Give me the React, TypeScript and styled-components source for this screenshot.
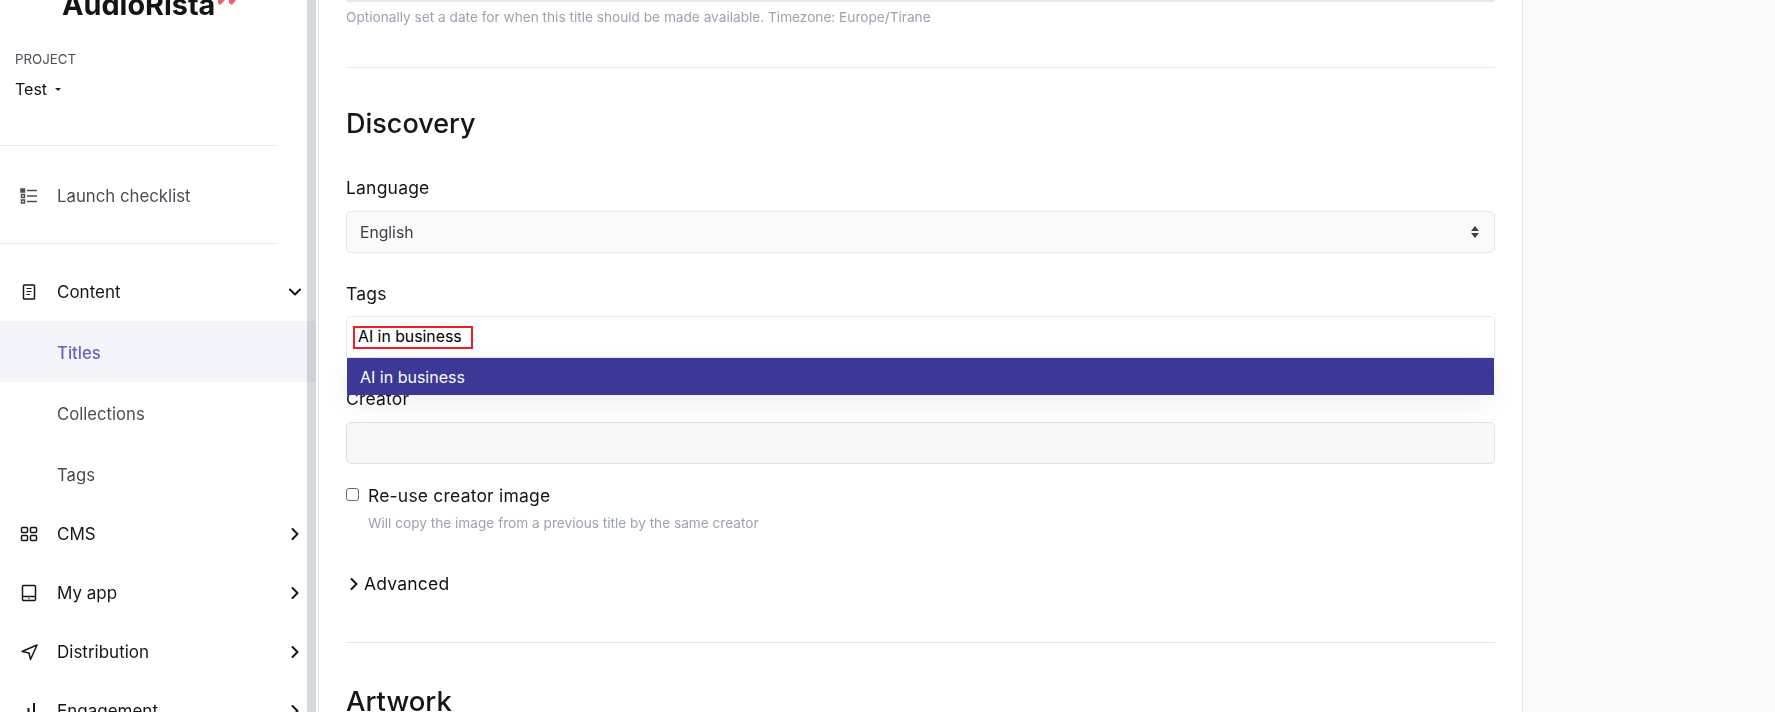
import React from 'react'
import styled, { createGlobalStyle } from 'styled-components'

const colors = {
  text: '#15151a',
  muted: '#4b4d55',
  hint: '#9ca3af',
  line: '#e5e7eb',
  field: '#fafafa',
  indigo: '#3b3897',
}

const GlobalStyle = createGlobalStyle`
  html, body {
    margin: 0;
    padding: 0;
    height: 100%;
    overflow: hidden;
    background: #fff;
  }
  body {
    font-family: Inter, "Liberation Sans", sans-serif;
    color: ${colors.text};
  }
`

const Page = styled.div`
  display: flex;
  width: 100%;
  height: 100vh;
  overflow: hidden;
`

const Sidebar = styled.aside`
  position: relative;
  flex: 0 0 316px;
  margin-right: 2px;
  &::after {
    content: '';
    position: absolute;
    top: 0;
    bottom: 0;
    right: 0;
    width: 9px;
    background: #d6d9dd;
    mix-blend-mode: multiply;
  }
`

const LogoRow = styled.div`
  display: flex;
  height: 26px;
  padding-left: 62px;
  gap: 3px;
  align-items: flex-start;
  overflow: hidden;
`

const Logo = styled.div`
  margin-top: -10px;
  font-size: 28.8px;
  line-height: 30px;
  font-weight: 700;
  color: #141414;
`

const LogoMark = styled.svg`
  width: 19px;
  height: 5px;
  fill: #e8606f;
`

const ProjectBlock = styled.div`
  padding: 25px 0 0 15px;
  height: 119px;
  box-sizing: border-box;
`

const ProjectLabel = styled.div`
  font-size: 13.3px;
  line-height: 16px;
  color: ${colors.muted};
`

const ProjectName = styled.div`
  display: flex;
  align-items: center;
  gap: 8px;
  margin-top: 13px;
  font-size: 16px;
  line-height: 18px;
  color: #111;
`

const Caret = styled.span`
  width: 0;
  height: 0;
  border-left: 3.5px solid transparent;
  border-right: 3.5px solid transparent;
  border-top: 3.5px solid #222;
`

const NavRule = styled.hr`
  width: 277px;
  margin: 0;
  border: 0;
  border-top: 1px solid ${colors.line};
`

const ChecklistRow = styled.div`
  display: flex;
  align-items: center;
  box-sizing: border-box;
  height: 97px;
  padding: 3px 0 0 20px;
  font-size: 16.8px;
  color: ${colors.muted};
  gap: 19px;
`

const NavList = styled.nav`
  padding-top: 18px;
`

const NavItem = styled.div`
  display: flex;
  align-items: center;
  height: 59px;
  padding: 0 14px 0 20px;
  gap: 19px;
  font-size: 17px;
  color: ${colors.text};
`

const NavLabel = styled.span`
  flex: 1;
`

const SubItem = styled.div<{ $active?: boolean }>`
  display: flex;
  align-items: center;
  box-sizing: border-box;
  height: 61px;
  padding: 2px 0 0 57px;
  font-size: 16.7px;
  color: ${(p) => (p.$active ? '#6d63b5' : colors.muted)};
  background: ${(p) => (p.$active ? '#f4f5fa' : 'transparent')};
  font-weight: ${(p) => (p.$active ? 450 : 400)};
`

const Main = styled.main`
  flex: 0 0 1205px;
  box-sizing: border-box;
  border-left: 1px solid ${colors.line};
  border-right: 1px solid ${colors.line};
  padding: 0 27px;
`

const TopField = styled.div`
  height: 2px;
  border-bottom: 2px solid ${colors.line};
  border-left: 1px solid ${colors.line};
  border-right: 1px solid ${colors.line};
  border-radius: 0 0 6px 6px;
  box-sizing: border-box;
`

const Hint = styled.p`
  margin: 7px 0 0;
  font-size: 13.65px;
  line-height: 16px;
  color: ${colors.hint};
`

const CheckHint = styled(Hint)`
  margin-top: 8px;
  padding-left: 22px;
`

const SectionRule = styled.hr`
  margin: 42px 0 0;
  border: 0;
  border-top: 1px solid ${colors.line};
`

const SectionTitle = styled.h2`
  margin: 0;
  font-size: 27px;
  line-height: 32px;
  font-weight: 500;
  color: ${colors.text};
`

const DiscoveryTitle = styled(SectionTitle)`
  margin-top: 40px;
`

const FieldLabel = styled.label`
  display: block;
  font-size: 17.5px;
  letter-spacing: 0.2px;
  line-height: 20px;
  color: ${colors.text};
`

const LanguageLabel = styled(FieldLabel)`
  margin-top: 38px;
`

const TagsLabel = styled(FieldLabel)`
  margin-top: 31px;
`

const CreatorLabel = styled(FieldLabel)`
  margin-top: 31px;
`

const SelectBox = styled.div`
  display: flex;
  align-items: center;
  justify-content: space-between;
  height: 42px;
  box-sizing: border-box;
  margin-top: 13px;
  padding: 0 14px 0 13px;
  background: ${colors.field};
  border: 1px solid ${colors.line};
  border-radius: 5px;
  font-size: 15.7px;
  color: #3c3f46;
`

const TagsWrap = styled.div`
  position: relative;
  margin-top: 12px;
`

const TagsBox = styled.div`
  display: flex;
  align-items: center;
  height: 42px;
  box-sizing: border-box;
  padding: 0 6px;
  background: #fff;
  border: 1px solid ${colors.line};
  border-radius: 5px 5px 0 0;
`

const TagChip = styled.span`
  display: inline-block;
  width: 120px;
  height: 23px;
  box-sizing: border-box;
  padding-left: 3px;
  border: 2px solid #ee1c25;
  font-size: 15.8px;
  line-height: 17px;
  color: #000;
`

const Dropdown = styled.div`
  position: absolute;
  top: 42px;
  left: 1px;
  right: 1px;
  z-index: 2;
  box-shadow: 0 10px 28px rgba(0, 0, 0, 0.06);
`

const Option = styled.div`
  display: flex;
  align-items: center;
  box-sizing: border-box;
  height: 37px;
  padding: 1px 0 0 13px;
  background: ${colors.indigo};
  color: #fff;
  font-size: 16px;
`

const CreatorInput = styled.div`
  height: 42px;
  box-sizing: border-box;
  margin-top: 13px;
  background: #f8f8f8;
  border: 1px solid #dfe1e5;
  border-radius: 5px;
`

const CheckRow = styled.div`
  display: flex;
  align-items: center;
  gap: 9px;
  margin-top: 21px;
  font-size: 17.5px;
  letter-spacing: 0.2px;
  line-height: 22px;
`

const CheckBox = styled.span`
  width: 13px;
  height: 13px;
  margin-bottom: 4px;
  box-sizing: border-box;
  border: 1px solid #6b6b6b;
  border-radius: 3px;
  background: #fff;
`

const AdvancedRow = styled.div`
  display: flex;
  align-items: center;
  gap: 3px;
  margin-top: 41px;
  padding-left: 1px;
  font-size: 17.5px;
  letter-spacing: 0.2px;
  line-height: 24px;
  color: #111;
`

const ArtworkRule = styled(SectionRule)`
  margin-top: 46px;
  border-top-color: #e3e8ef;
`

const ArtworkTitle = styled(SectionTitle)`
  margin-top: 42px;
  font-size: 27.5px;
`

const Aside = styled.div`
  flex: 1;
  background: #f9f9f9;
`

const IconBox = styled.svg`
  flex: 0 0 18px;
  width: 18px;
  height: 18px;
  fill: none;
  stroke: currentColor;
  stroke-width: 1.5;
`

const ChevronIcon = styled.svg`
  width: 14px;
  height: 14px;
  fill: none;
  stroke: #16161c;
  stroke-width: 2;
  stroke-linecap: round;
  stroke-linejoin: round;
`

const ChevronRight = () => (
  <ChevronIcon viewBox="0 0 14 14">
    <path d="M4.500 2 9.500 7l-5 5" />
  </ChevronIcon>
)

const ChevronDown = () => (
  <ChevronIcon viewBox="0 0 14 14">
    <path d="M2 4.500 7 9.500l5-5" />
  </ChevronIcon>
)

const navIcons = {
  list: (
    <IconBox viewBox="0 0 18 18">
      <path d="M7 3.500h10M7 9h10M7 14.500h10" />
      <rect x="1" y="2" width="3.500" height="3" fill="currentColor" />
      <rect x="1.500" y="7.500" width="3" height="3" />
      <rect x="1.500" y="13" width="3" height="3" />
    </IconBox>
  ),
  doc: (
    <IconBox viewBox="0 0 18 18" strokeWidth="2">
      <rect x="3.500" y="2" width="11" height="14" rx="0.800" />
      <path d="M6.500 5.500h5M6.500 8.500h5M6.500 11.500h3.500" strokeWidth="1.200" />
    </IconBox>
  ),
  grid: (
    <IconBox viewBox="0 0 18 18">
      <rect x="1.500" y="2.500" width="6" height="5" rx="1" />
      <rect x="10.500" y="2.500" width="6" height="5" rx="1" />
      <rect x="1.500" y="10.500" width="6" height="5" rx="1" />
      <rect x="10.500" y="10.500" width="6" height="5" rx="1" />
    </IconBox>
  ),
  tablet: (
    <IconBox viewBox="0 0 18 18">
      <rect x="2.500" y="1.500" width="13" height="15" rx="1" />
      <path d="M2.500 12.500h13M8.500 14.600h1" />
    </IconBox>
  ),
  send: (
    <IconBox viewBox="0 0 18 18">
      <path d="M17 2 2 8.500 9 10l1.500 6.500z" strokeLinejoin="round" />
    </IconBox>
  ),
  bars: (
    <IconBox viewBox="0 0 18 18">
      <path d="M3 17v-5M8.500 17V6M14 17V1" strokeWidth="2" />
    </IconBox>
  ),
}

const App: React.FC = () => {
  return (
    <Page>
      <GlobalStyle />
      <Sidebar>
        <LogoRow>
          <Logo>AudioRista</Logo>
          <LogoMark viewBox="0 0 19 5">
            <path d="M0 0h7L2 5 0 3zM11 0h7l-4 5-3-2z" />
          </LogoMark>
        </LogoRow>
        <ProjectBlock>
          <ProjectLabel>PROJECT</ProjectLabel>
          <ProjectName>
            Test <Caret />
          </ProjectName>
        </ProjectBlock>
        <NavRule />
        <ChecklistRow>
          {navIcons.list}
          <span>Launch checklist</span>
        </ChecklistRow>
        <NavRule />
        <NavList>
          <NavItem>
            {navIcons.doc}
            <NavLabel>Content</NavLabel>
            <ChevronDown />
          </NavItem>
          <SubItem $active>Titles</SubItem>
          <SubItem>Collections</SubItem>
          <SubItem>Tags</SubItem>
          <NavItem>
            {navIcons.grid}
            <NavLabel>CMS</NavLabel>
            <ChevronRight />
          </NavItem>
          <NavItem>
            {navIcons.tablet}
            <NavLabel>My app</NavLabel>
            <ChevronRight />
          </NavItem>
          <NavItem>
            {navIcons.send}
            <NavLabel>Distribution</NavLabel>
            <ChevronRight />
          </NavItem>
          <NavItem>
            {navIcons.bars}
            <NavLabel>Engagement</NavLabel>
            <ChevronRight />
          </NavItem>
        </NavList>
      </Sidebar>
      <Main>
        <TopField />
        <Hint>Optionally set a date for when this title should be made available. Timezone: Europe/Tirane</Hint>
        <SectionRule />
        <DiscoveryTitle>Discovery</DiscoveryTitle>
        <LanguageLabel>Language</LanguageLabel>
        <SelectBox>
          English
          <svg width="10" height="14" viewBox="0 0 10 14" fill="#3c3f46">
            <path d="M5 1 9 6H1zM5 13 1 8h8z" />
          </svg>
        </SelectBox>
        <TagsLabel>Tags</TagsLabel>
        <TagsWrap>
          <TagsBox>
            <TagChip>AI in business</TagChip>
          </TagsBox>
          <Dropdown>
            <Option>AI in business</Option>
          </Dropdown>
        </TagsWrap>
        <CreatorLabel>Creator</CreatorLabel>
        <CreatorInput />
        <CheckRow>
          <CheckBox />
          Re-use creator image
        </CheckRow>
        <CheckHint>Will copy the image from a previous title by the same creator</CheckHint>
        <AdvancedRow>
          <ChevronRight />
          Advanced
        </AdvancedRow>
        <ArtworkRule />
        <ArtworkTitle>Artwork</ArtworkTitle>
      </Main>
      <Aside />
    </Page>
  )
}

export default App
